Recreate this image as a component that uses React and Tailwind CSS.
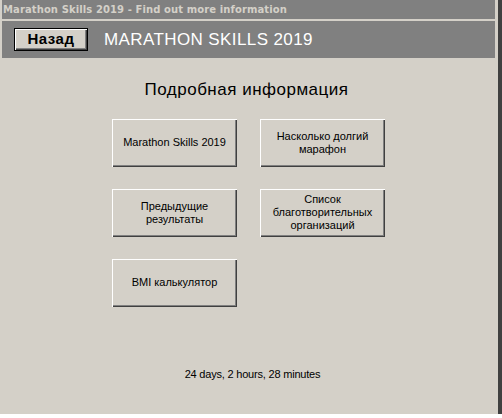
const bevel =
  "shadow-[inset_1px_1px_0_#ffffff,inset_-1px_-1px_0_#404040,inset_-2px_-2px_0_#808080]";

const WinButton = ({ children }) => (
  <button
    className={`w-[125px] h-[48px] bg-[#d4d0c8] ${bevel} flex items-center justify-center text-center text-[11px] leading-[13px] text-black font-['Liberation_Sans',sans-serif] px-2`}
  >
    {children}
  </button>
);

export default function App() {
  return (
    <div className="w-[502px] h-[418px] bg-white flex flex-col overflow-hidden">
      <div className="flex h-[414px]">
        <div className="flex-1 flex flex-col bg-[#d4d0c8] pl-[2px] pr-[3px]">
          {/* title bar */}
          <div className="h-[19px] bg-[#808080] flex items-center px-[1px]">
            <span className="text-[10px] font-bold text-[#d4d0c8] font-['DejaVu_Sans',sans-serif] tracking-[0.1px]">
              Marathon Skills 2019 - Find out more information
            </span>
          </div>
          <div className="h-[2px] bg-[#d4d0c8]" />
          {/* header */}
          <div className="h-[37px] bg-[#808080] flex items-center pl-[12px]">
            <button
              className={`w-[74px] h-[23px] bg-[#d4d0c8] border border-black ${bevel} text-[15px] font-bold text-black font-['Liberation_Sans',sans-serif] tracking-[0.5px] flex items-center justify-center`}
            >
              Назад
            </button>
            <span className="ml-[16px] text-white text-[17px] font-['Liberation_Sans',sans-serif] tracking-[0.4px]">
              MARATHON SKILLS 2019
            </span>
          </div>
          {/* body */}
          <div className="flex-1 flex flex-col items-center">
            <h1 className="mt-[19px] text-[17px] text-black font-['Liberation_Sans',sans-serif] tracking-[0.5px] pr-[4px]">
              Подробная информация
            </h1>
            <div className="mt-[16px] grid grid-cols-[125px_125px] gap-x-[23px] gap-y-[22px]">
              <WinButton>Marathon Skills 2019</WinButton>
              <WinButton>
                Насколько долгий
                <br />
                марафон
              </WinButton>
              <WinButton>
                Предыдущие
                <br />
                результаты
              </WinButton>
              <WinButton>
                Список
                <br />
                благотворительных
                <br />
                организаций
              </WinButton>
              <WinButton>BMI калькулятор</WinButton>
            </div>
            <p className="mt-[59px] text-[11px] text-black font-['Liberation_Sans',sans-serif] tracking-[-0.2px] pl-[8px]">
              24 days, 2 hours, 28 minutes
            </p>
          </div>
        </div>
        <div className="w-[4px] bg-[#404040]" />
      </div>
    </div>
  );
}
